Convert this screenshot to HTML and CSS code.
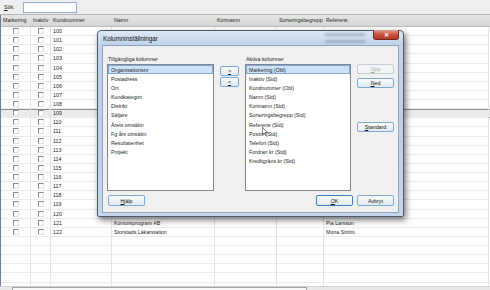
FILE: index.html
```html
<!DOCTYPE html>
<html lang="sv">
<head>
    <meta charset="UTF-8">
    <meta name="viewport" content="width=device-width, initial-scale=1.0">
    <title>Kunder</title>
    <link rel="stylesheet" href="styles.css">
</head>
<body>
    <div class="toolbar">
        <label for="sok"><u>S</u>ök:</label>
        <input type="text" id="sok">
    </div>

    <div class="grid">
        <div class="row head">
            <div class="cell">Markering</div>
            <div class="cell">Inaktiv</div>
            <div class="cell">Kundnummer</div>
            <div class="cell">Namn</div>
            <div class="cell">Kortnamn</div>
            <div class="cell">Sorteringsbegrepp</div>
            <div class="cell">Referens</div>
        </div>
        <div id="rows"></div>
    </div>
    <div class="hscroll"><div class="thumb"></div></div>

    <div class="dialog">
        <div class="titlebar">
            <span class="title">Kolumninställningar</span>
            <div class="glare g1"></div>
            <div class="glare g2"></div>
            <button type="button" class="close">&#x2715;</button>
        </div>
        <div class="client">
            <div class="label">Tillgängliga kolumner</div>
            <div></div>
            <div class="label">Aktiva kolumner</div>
            <div></div>

            <ul class="list">
                <li class="sel">Organisationsnr</li>
                <li>Postadress</li>
                <li>Ort</li>
                <li>Kundkategori</li>
                <li>Distrikt</li>
                <li>Säljare</li>
                <li>Årets omsättn</li>
                <li>Fg års omsättn</li>
                <li>Resultatenhet</li>
                <li>Projekt</li>
            </ul>
            <div class="move">
                <button type="button" class="btn"><u>&gt;</u></button>
                <button type="button" class="btn"><u>&lt;</u></button>
            </div>
            <ul class="list">
                <li class="sel">Markering (Obl)</li>
                <li>Inaktiv (Std)</li>
                <li>Kundnummer (Obl)</li>
                <li>Namn (Std)</li>
                <li>Kortnamn (Std)</li>
                <li>Sorteringsbegrepp (Std)</li>
                <li>Referens (Std)</li>
                <li>Postnr (Std)</li>
                <li>Telefon (Std)</li>
                <li>Fordran kr (Std)</li>
                <li>Kreditgräns kr (Std)</li>
            </ul>
            <div class="side">
                <button type="button" class="btn" disabled><u>U</u>pp</button>
                <button type="button" class="btn"><u>N</u>ed</button>
                <button type="button" class="btn standard"><u>S</u>tandard</button>
            </div>

            <div class="footer">
                <button type="button" class="btn"><u>H</u>jälp</button>
                <div class="spacer"></div>
                <button type="button" class="btn default"><u>O</u>K</button>
                <button type="button" class="btn">Avbryt</button>
            </div>
        </div>
    </div>

    <svg class="cursor" width="6" height="9" viewBox="0 0 12 19">
        <path d="M0.5 0.5 L0.5 16 L4 12.5 L6.5 18 L8.5 17 L6 11.5 L11 11.5 Z" fill="#fff" stroke="#000" stroke-width="1"/>
    </svg>

    <script>
        // Fyll griden med kunder
        const rows = document.getElementById('rows');
        const namn = { 120: 'Storstads Kontorsservice', 121: 'Kontorsprogram AB', 122: 'Storstads Läkarstation' };
        const referens = { 120: 'Ann Larsson', 121: 'Pia Larsson', 122: 'Mona Ström' };

        for (let i = 0; i < 29; i++) {
            const nr = 100 + i;
            const row = document.createElement('div');
            row.classList.add('row');
            if (nr === 109) row.classList.add('current');
            const har = nr <= 122;
            row.innerHTML = `
                <div class="cell box">${har ? '<span class="chk"></span>' : ''}</div>
                <div class="cell box">${har ? '<span class="chk"></span>' : ''}</div>
                <div class="cell">${har ? nr : ''}</div>
                <div class="cell">${namn[nr] || ''}</div>
                <div class="cell"></div>
                <div class="cell"></div>
                <div class="cell">${referens[nr] || ''}</div>
            `;
            rows.appendChild(row);
        }
    </script>
</body>
</html>
```

FILE: styles.css
```css
* {
    box-sizing: border-box;
}
body {
    margin: 0;
    width: 490px;
    height: 290px;
    overflow: hidden;
    font-family: "Liberation Sans", Arial, sans-serif;
    font-size: 5.3px;
    color: #1e1e1e;
    background: #fff;
}
u {
    text-decoration: underline;
}

/* verktygsrad */
.toolbar {
    height: 15px;
    display: flex;
    align-items: center;
    gap: 8px;
    padding: 0 4px;
    background: #eeeeee;
    border-bottom: 1px solid #b4b4b4;
}
.toolbar input {
    width: 54px;
    height: 11px;
    margin: 0;
    padding: 0;
    border: 1px solid #8fb2dc;
    background: #fff;
}

/* grid */
.grid {
    height: 271px;
    overflow: hidden;
    border-left: 1px solid #6d7f96;
}
.row {
    display: grid;
    grid-template-columns: 30px 20px 61px 103px 62px 47px 165px;
    height: 9.14px;
}
.cell {
    border-right: 1px solid #e3e3e3;
    border-bottom: 1px solid #ececec;
    padding-left: 2px;
    line-height: 8px;
    white-space: nowrap;
    overflow: hidden;
}
.cell.box {
    padding: 0;
}
.head {
    height: 12px;
    background: linear-gradient(#e6e6e6, #d5d5d5);
    border-bottom: 1px solid #bdbdbd;
}
.head .cell {
    border: none;
    line-height: 11px;
}
.row.current {
    background: #ebebeb;
    box-shadow: inset 0 1px 0 #8c8c8c, inset 0 -1px 0 #8c8c8c;
}
.chk {
    display: block;
    width: 6px;
    height: 6px;
    margin: 1px auto 0;
    background: #fff;
    border-top: 1px solid #8a8a8a;
    border-left: 1px solid #8a8a8a;
    border-right: 1px solid #e4e4e4;
    border-bottom: 1px solid #e4e4e4;
}
.hscroll {
    height: 4px;
    background: #e9e9e9;
    border-top: 1px solid #d0d0d0;
    padding-left: 12px;
}
.thumb {
    width: 295px;
    height: 3px;
    background: #f6f6f6;
    border: 1px solid #a3a3a3;
    border-bottom: none;
}

/* dialog */
.dialog {
    position: absolute;
    left: 97px;
    top: 30px;
    width: 307px;
    height: 187px;
    padding: 0 4px 4px;
    background: linear-gradient(#dde8f4, #c0d3e9 14px, #bcd0e7 60%, #c6d7eb);
    border: 1px solid #4e5a68;
    border-radius: 4px 4px 2px 2px;
    box-shadow: 2px 3px 6px rgba(0, 0, 0, 0.55);
}
.titlebar {
    position: relative;
    height: 14px;
    display: flex;
    align-items: center;
    padding-left: 1px;
}
.title {
    font-size: 6.3px;
    color: #111;
}
.glare {
    position: absolute;
    left: 223px;
    width: 40px;
    height: 3px;
    background: rgba(110, 130, 160, 0.45);
    filter: blur(1px);
}
.g1 {
    top: 2px;
}
.g2 {
    top: 9px;
}
.close {
    position: absolute;
    right: 0;
    top: -1px;
    width: 26px;
    height: 10px;
    padding: 0;
    border: 1px solid #6e2a22;
    border-top: none;
    border-radius: 0 0 3px 3px;
    background: linear-gradient(#e0a094, #c9513f 50%, #b8392a);
    color: #fff;
    font-size: 6px;
    font-weight: bold;
    line-height: 8px;
}
.client {
    height: 168px;
    display: grid;
    grid-template-columns: 107px 19px 106px 37px;
    grid-template-rows: 9px 127px auto;
    column-gap: 6px;
    padding: 9px 4px 0;
    background: #f0f0f0;
    border: 1px solid #8ea5c0;
}
.label {
    padding-left: 1px;
    line-height: 9px;
}
.list {
    list-style: none;
    margin: 0;
    padding: 0;
    background: #fff;
    border: 1px solid #828790;
}
.list li {
    height: 9.1px;
    line-height: 8px;
    padding-left: 2px;
    border: 1px solid transparent;
    white-space: nowrap;
}
.list li.sel {
    background: #cce2f8;
    border-color: #80a9d9;
}
.btn {
    height: 10px;
    margin: 0;
    padding: 0;
    font-family: "Liberation Sans", Arial, sans-serif;
    font-size: 5.3px;
    color: #111;
    background: linear-gradient(#fbfdff, #eef3f8 50%, #e2e9f1);
    border: 1px solid #7ea8da;
    border-radius: 2px;
    line-height: 8px;
}
.btn:disabled {
    color: #a6a6a6;
    border-color: #c4ced9;
    background: #f3f5f7;
}
.move {
    display: flex;
    flex-direction: column;
    gap: 1px;
    padding-top: 2px;
}
.side {
    display: flex;
    flex-direction: column;
    gap: 4px;
}
.side .standard {
    margin-top: 30px;
}
.footer {
    grid-column: 1 / -1;
    display: flex;
    gap: 4px;
    margin-top: 4px;
    padding-left: 1px;
}
.footer .btn {
    width: 37px;
    height: 11px;
}
.footer .default {
    border-color: #3c7fc6;
}
.spacer {
    flex: 1;
}
.cursor {
    position: absolute;
    left: 262px;
    top: 127px;
}
```
